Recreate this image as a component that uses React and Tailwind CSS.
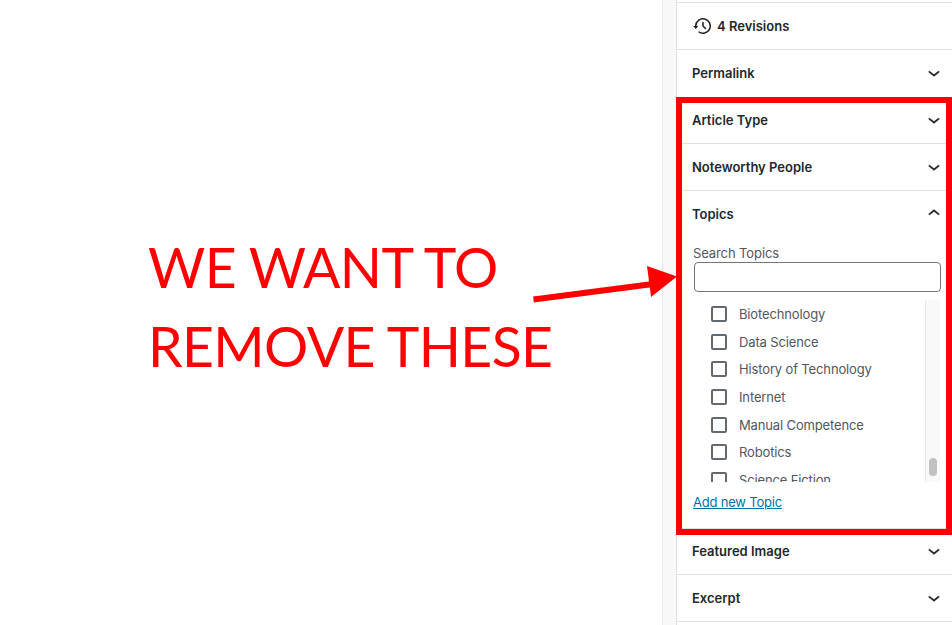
const DOWN = "M17.5 11.6L12 16l-5.5-4.4.9-1.2L12 14l4.5-3.6 1 1.2z";
const UP = "M6.5 12.4L12 8l5.5 4.4-.9 1.2L12 10l-4.5 3.6-1-1.2z";

function Chevron({ up }) {
  return (
    <svg width="24" height="24" viewBox="0 1.5 24 24" fill="#1e1e1e" stroke="#1e1e1e" strokeWidth="0.3" className="shrink-0">
      <path d={up ? UP : DOWN} />
    </svg>
  );
}

function Row({ label, up, cls, inFrame, border = true }) {
  return (
    <div
      className={`flex items-center justify-between text-[13px] font-semibold text-[#23282d] ${cls} ${inFrame ? "pl-[10px]" : "pl-[15px] pr-[6px]"} ${border ? "border-b border-[#e0e0e0]" : ""}`}
    >
      <span>{label}</span>
      <Chevron up={up} />
    </div>
  );
}

const topics = ["Biotechnology", "Data Science", "History of Technology", "Internet", "Manual Competence", "Robotics", "Science Fiction"];

export default function App() {
  return (
    <div className="relative flex h-[625px] w-[952px] overflow-hidden bg-white font-['Inter','Liberation_Sans',sans-serif]">
      <div className="w-[662px] shrink-0 pl-[148px] pt-[228px] font-['Lato',sans-serif] text-[56px] leading-[78.5px] text-[#ff0000]">
        <div className="origin-left scale-x-[0.987] tracking-[-0.6px] whitespace-nowrap">WE WANT TO</div>
        <div className="origin-left scale-x-[0.987] tracking-[-0.6px] whitespace-nowrap">REMOVE THESE</div>
      </div>
      <div className="w-[14px] shrink-0 border-l border-[#e8e8e8] bg-[#f8f8f8]" />
      <div className="flex w-[276px] shrink-0 flex-col border-l border-[#e0e0e0] pt-[2px]">
        <div className="flex h-[48px] items-center gap-[2px] border-y border-[#e0e0e0] pl-[14px] pt-px text-[13px] font-semibold text-[#23282d]">
          <svg width="24" height="24" viewBox="0 0 24 24" fill="#1e1e1e" className="-mt-[2px] shrink-0">
            <path d="M5.5 12h1.75l-2.5 3-2.5-3H4a8 8 0 113.134 6.35l.907-1.194A6.5 6.5 0 105.5 12zm9.53 1.97l-2.28-2.28V8.5a.75.75 0 00-1.5 0V12a.747.747 0 00.218.529l2.5 2.5a.75.75 0 101.06-1.061z" />
          </svg>
          <span>4 Revisions</span>
        </div>
        <Row label="Permalink" cls="h-[47px]" border={false} />
        <div className="-ml-px flex h-[438px] w-[276px] shrink-0 flex-col border-[6px] border-[#ff0000]">
          <Row label="Article Type" cls="h-[41px] pb-[4px]" inFrame />
          <Row label="Noteworthy People" cls="h-[47px] pt-px" inFrame />
          <Row label="Topics" up cls="h-[47px]" inFrame border={false} />
          <div className="flex flex-1 flex-col border-b border-[#e0e0e0] pl-[11px] pr-[5px]">
            <div className="pt-[7px] text-[13px] leading-[17px] tracking-[-0.1px] text-[#50575e]">Search Topics</div>
            <div className="ml-px h-[30px] rounded-[4px] border border-[#757575] bg-white" />
            <div className="relative ml-px mt-[8px] h-[182px] overflow-hidden">
              <div className="flex flex-col pl-[17px] pt-[6px]">
                {topics.map((t) => (
                  <div key={t} className="flex h-[27.67px] shrink-0 items-start gap-3 text-[13px] leading-[17px] tracking-[-0.14px] text-[#50575e]">
                    <span className="h-4 w-4 shrink-0 rounded-[2px] border-2 border-[#646970]" />
                    <span>{t}</span>
                  </div>
                ))}
              </div>
              <div className="absolute right-px top-0 h-full w-[15px] border-l border-[#e8e8e8] bg-[#f9f9f9]">
                <div className="absolute left-[3px] top-[158px] h-[18px] w-2 rounded bg-[#c1c1c1]" />
              </div>
            </div>
            <a className="mt-[12px] text-[13px] leading-[17px] tracking-[-0.2px] text-[#0073aa] underline">Add new Topic</a>
          </div>
        </div>
        <Row label="Featured Image" cls="h-[40px] pb-[6px]" />
        <Row label="Excerpt" cls="h-[47px] pt-px" />
      </div>
      <svg width="160" height="50" viewBox="0 0 160 50" className="absolute left-[525px] top-[260px]">
        <line x1="8.5" y1="39.5" x2="128" y2="24" stroke="#ff0000" strokeWidth="6" />
        <polygon points="122,6 152,16.5 126,37" fill="#ff0000" />
      </svg>
    </div>
  );
}
